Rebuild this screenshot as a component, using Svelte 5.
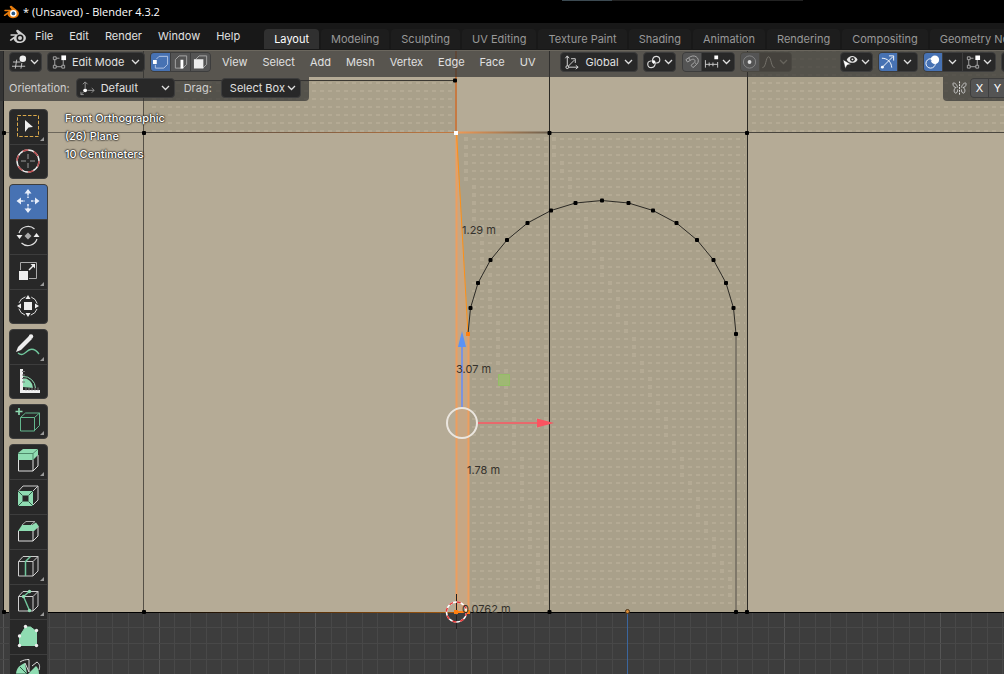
<script>
  const menus = ['File', 'Edit', 'Render', 'Window', 'Help']
  const tabs = ['Layout', 'Modeling', 'Sculpting', 'UV Editing', 'Texture Paint', 'Shading', 'Animation', 'Rendering', 'Compositing', 'Geometry Nodes']
  const viewMenus = ['View', 'Select', 'Add', 'Mesh', 'Vertex', 'Edge', 'Face', 'UV']

  let activeTab = $state('Layout')
  let activeTool = $state('Move')
  let selectMode = $state('Vertex select')

  const blender = (main, ring, pupil) => `<path fill="${main}" d="M9.3 1.600l6 4.700c1 .9 1.600 2 1.600 3.300 0 2.800-2.700 5-6.100 5-3.200 0-5.600-1.800-6.100-4.200l-2.500 1.800c-.9.6-1.900-.5-1-1.200l5-3.800H2.100c-1 0-1-1.500 0-1.500h7.200L7.500 3.200c-1.200-1 .6-2.600 1.800-1.600z"/><circle cx="11" cy="9.500" r="3.500" fill="${ring}"/><circle cx="11" cy="9.500" r="2" fill="${pupil}"/>`
  const cubeBack = `<path d="M4.500 9l4.500-5h15v14l-5 5M19 9l5-5" stroke="#ccc" fill="none"/>`
  const quad = `<path d="M4 5.500v6M5.500 13h6M13 11.500v-6M5.500 4H9" stroke="#aaa"/><path d="M2.500 2.500h3v3h-3zM2.500 11.500h3v3h-3zM11.500 11.500h3v3h-3z" stroke="#aaa" fill="none"/><path d="M11 1h5v5h-5z" fill="#fff"/>`

  const icons = {
    logo: blender('#e87d0d', '#fff', '#265787'),
    logoMono: blender('#d0d0d0', '#181818', '#d0d0d0'),
    viewport: `<path d="M5 5.500L3.500 15M10.500 9L9.500 15M1 8h8M0 12.500h14" stroke="#c8c8c8" fill="none"/><circle cx="11.500" cy="4.500" r="3.500" fill="#eee"/>`,
    editMode: quad,
    vertexSel: `<path d="M3.500 5l3-3h9v8.500l-4 4h-9V11" stroke="#b9c9e6" fill="none"/><path d="M0 6h4v4H0z" fill="#fff"/>`,
    edgeSel: `<path d="M2.500 14.500v-9l4-4h8v9l-4 4z" stroke="#aaa" fill="none"/><path d="M8 5.500h3V15H8z" fill="#fff"/>`,
    faceSel: `<path d="M2.500 5.500l4-4h8v9l-4 4z" stroke="#aaa" fill="none"/><path d="M1 5h10v10H1z" fill="#eee"/>`,
    global: `<path d="M3.500 2v11.500H15M3.500 13.500L11 6M1.500 4l2-2.500 2 2.500M12.500 11.500l2.500 2-2.500 2M7.500 4.500H12V9" stroke="#ddd" fill="none"/><circle cx="3.500" cy="13.500" r="1.500" fill="#282828" stroke="#ddd"/>`,
    pivot: `<path d="M8.500 9.500c-3-2-1.500-7.500 2.500-7.500 4.500 0 5 6.500.5 7h-1M8 6.500c3.500 2 1.500 7.500-2.500 7.500C1 14 .5 7.500 5 7h1" stroke="#ddd" fill="none" stroke-width="1.200"/><circle cx="8.200" cy="8" r="1.500" fill="#fff"/>`,
    magnet: `<path d="M2 5.500l4.500-3C13-1 18 6 13.500 10.500L9.500 14 7.500 11.500l3.500-3c2-2-.5-4.500-3-3L3.700 8zM11.500 8.500l2 2M5 3.500l1.500 2.500" stroke="#aaa" fill="none"/>`,
    increment: `<path d="M1.500 6v8M5.500 8.500v4M9.500 8.500v4M14.500 8v6M1.500 10.500h13" stroke="#ccc" fill="none"/><path d="M11 1h4v4h-4z" fill="#fff"/>`,
    propEdit: `<circle cx="8" cy="8" r="6.500" stroke="#888" fill="none"/><circle cx="8" cy="8" r="2" fill="#ddd"/>`,
    falloff: `<path d="M1.500 14c4 0 3.500-11.500 6.500-11.500S10.500 14 14.500 14" stroke="#77746e" fill="none"/>`,
    visibility: `<path d="M4 5.500c2.500-5 9-5 11.500 0-2.500 4.500-9 4.500-11.500 0z" fill="#e5e5e5"/><circle cx="10" cy="5.200" r="2.500" fill="#282828"/><circle cx="10" cy="5.200" r="1" fill="#eee"/><path d="M0 5.500l8.500 5-4 .7L2.500 15z" fill="#fff" stroke="#282828" stroke-width=".5"/>`,
    gizmo: `<path d="M2 14L13.500 2.500M2 4c6 0 10 4 10.500 10M9.500 1.500h5v5" stroke="#fff" fill="none"/><circle cx="2.500" cy="13.500" r="1.500" fill="#fff"/>`,
    overlays: `<circle cx="6" cy="9.500" r="5" stroke="#fff" fill="none"/><circle cx="10.500" cy="5.500" r="4.500" fill="#fff"/><path d="M6.500 6c-1.500 3 .5 5.500 3.500 5" stroke="#4772b3" fill="none"/>`,
    xray: `<path d="M1.500 3.500h10v11h-10z" stroke="#ddd" stroke-width="2" fill="none"/>`,
    orient: `<path d="M5.500 8V2M3 4l2.500-2.500L8 4M8 10.500h7M12.500 8l2.500 2.500-2.500 2.500M4 12l-3 3M1 12v3h3" stroke="#999" fill="none"/><circle cx="5.500" cy="10.500" r="2" fill="#fff"/>`,
    mirror: `<path d="M6 7.500C5 3 1 1.500 1 3.500c0 3 2 4 3.500 4C2 8 1.500 12 3.500 13.500c2 0 2.500-2 2.500-4M10 7.500c1-4.500 5-6 5-4 0 3-2 4-3.500 4 2.500.5 3 4.500 1 6-2 0-2.500-2-2.500-4" stroke="#ccc" fill="none"/><path d="M8 1v14" stroke="#eee" stroke-dasharray="2 1"/>`
  }

  const toolGroups = [
    [
      { name: 'Select Box', more: true, art: `<path d="M3.500 3.500h21v21h-21z" stroke="#d9a84a" stroke-dasharray="3.500 1.750" fill="none"/><path d="M11 8l8 7-4.500.5L11 20z" fill="#eee"/>` },
      { name: 'Cursor', art: `<circle cx="14" cy="14" r="11" stroke="#eee" fill="none" stroke-width="1.400"/><circle cx="14" cy="14" r="11" stroke="#b9484b" stroke-dasharray="5.800 5.700" fill="none" stroke-width="1.400"/><path d="M14 7v5M14 16v5M7 14h5M16 14h5" stroke="#999"/>` }
    ],
    [
      { name: 'Move', art: `<path d="M14 2l3.500 4.500h-7zM14 26l3.500-4.500h-7zM2.500 14L7 10.500v7zM25.500 14L21 10.500v7z" fill="#e8eefa"/><path d="M14 6v5M14 17v5M7 14h4M17 14h4" stroke="#e8eefa" stroke-width="1.500" stroke-dasharray="2.500 1"/>` },
      { name: 'Rotate', art: `<path d="M5 11a9.500 9.500 0 0 1 15.500-4M23 17a9.500 9.500 0 0 1-15.500 4" stroke="#ddd" fill="none" stroke-width="1.200"/><path d="M2.500 13h6L5.500 17zM19.500 15h6L22.500 11z" fill="#eee"/><path d="M14 10.500l3.500 3.500-3.500 3.500-3.500-3.500z" fill="#aaa"/>` },
      { name: 'Scale', more: true, art: `<path d="M6.500 13V5.500h16v16H15" stroke="#aaa" fill="none"/><path d="M5 14h9v9H5z" fill="#eee"/><path d="M15 13l4-4" stroke="#eee" stroke-width="1.500"/><path d="M21 7v4.500L16.500 7z" fill="#eee"/>` },
      { name: 'Transform', art: `<circle cx="14" cy="14" r="9.500" stroke="#ddd" fill="none" stroke-dasharray="9 5.920" stroke-dashoffset="-3"/><path d="M10 10h8v8h-8zM14 3l2.500 4h-5zM14 25l2.500-4h-5zM3 14l4-2.500v5zM25 14l-4-2.500v5z" fill="#eee"/>` }
    ],
    [
      { name: 'Annotate', more: true, art: `<path d="M3 22c5 4 7-1 11-3s7 0 10 4" stroke="#71c79d" fill="none" stroke-width="1.400" transform="translate(1 -1)"/><path d="M2 20l2-5L15 4l3 3L7 18z" fill="#eee"/><circle cx="17" cy="4.500" r="2.200" fill="#eee"/>` },
      { name: 'Measure', art: `<path d="M9 20V11a10 10 0 0 1 10 10z" fill="#8fdcb2"/><path d="M9 9.500A12 12 0 0 1 21.500 21" stroke="#8fdcb2" fill="none"/><path d="M7.500 2v22.500H26" stroke="#eee" fill="none" stroke-width="3"/><path d="M11 4.500H8M11 8H8M11 11.500H8M11 15H8M12 20.500v3M15 20.500v3M18 20.500v3M21 20.500v3M24 20.500v3" stroke="#777"/>` }
    ],
    [
      { name: 'Add Cube', more: true, art: `<path d="M5 1v7M1.500 4.500h7" stroke="#8fdcb2" stroke-width="1.600"/><path d="M6.500 10.500h14v13.500h-14zM6.500 10.500l5-4.500h14v12.500l-5 5M20.500 10.500l5-4.500" stroke="#63b68d" fill="none"/>` }
    ],
    [
      { name: 'Extrude Region', more: true, art: `<path d="M4 6l5-4h15v6l-5 5H4z" fill="#8fdcb2"/><path d="M4 6.500h15l5-4.500M19 6.500V13" stroke="#4f8a6b" fill="none"/><path d="M4.500 13v11h14.500V13M24 8v11l-5 5" stroke="#ddd" fill="none"/>` },
      { name: 'Inset Faces', art: `${cubeBack}<path d="M4 9h15v15H4z" fill="#8fdcb2"/><path d="M8.500 13.500h6v6h-6z" fill="#282828"/><path d="M4 9l4.500 4.500M19 9l-4.500 4.500M4 24l4.500-4.500M19 24l-4.500-4.500" stroke="#2f5a45"/>` },
      { name: 'Bevel', art: `<path d="M8 8l4-3.500h9L17 8" stroke="#aaa" fill="none"/><path d="M4 14l4-6h10l4-2.500 3 4-5 4.500z" fill="#8fdcb2"/><path d="M4.500 14v10H19V14M24 10v9l-5 5" stroke="#ddd" fill="none"/>` },
      { name: 'Loop Cut', more: true, art: `<path d="M4.500 9.500v14.500H19V9.500zM4.500 9.500L9 4.500h15V19l-5 5M19 9.500l5-5" stroke="#ccc" fill="none"/><path d="M11.500 24V9.500l5-5" stroke="#71c79d" fill="none" stroke-width="1.500"/>` },
      { name: 'Knife', more: true, art: `<path d="M4.500 9.500v14.500H19V9.500zM4.500 9.500L9 4.500h15V19l-5 5M19 9.500l5-5" stroke="#ccc" fill="none"/><path d="M15.500 4.500L9.500 9.500l6 14" stroke="#71c79d" fill="none" stroke-width="1.400"/><circle cx="15.500" cy="4.500" r="1.700" fill="#8fdcb2"/><circle cx="9.500" cy="9.500" r="1.700" fill="#8fdcb2"/><circle cx="15.500" cy="23.500" r="1.700" fill="#8fdcb2"/>` },
      { name: 'Poly Build', art: `<path d="M5.500 23.500v-9L11.500 5l5 0 6 4.500v14z" fill="#8fdcb2" stroke="#8fdcb2" stroke-linejoin="round"/><g fill="#eee"><circle cx="11.500" cy="4.500" r="1.700"/><circle cx="22.500" cy="8.500" r="1.700"/><circle cx="5.500" cy="14" r="1.700"/><circle cx="5.500" cy="23.500" r="1.700"/><circle cx="22.500" cy="23.500" r="1.700"/></g>` },
      { name: 'Spin', art: `<path d="M2 18c0-7 4-10 9-12l2 11zM14 17l8-8c3 3 3 6 3 10h-9z" fill="#8fdcb2"/><path d="M6 5c3-2 6-2.500 9-2.500V15l-4-9M18 9l5-4c3 2 3 5 2 8" stroke="#ddd" fill="none"/><path d="M2 17h24v11H2z" fill="#8fdcb2"/><path d="M13 17L6 10M13 17H2M14 17v10" stroke="#2f5a45"/>` }
    ]
  ]

  const arch = [
    [468, 334], [470.5, 308], [478, 283], [490.5, 260], [507, 240], [527.5, 223], [551, 210.5], [575.5, 203], [602, 200.5],
    [628.5, 203], [653, 210.5], [676.5, 223], [697, 240], [713.5, 260], [726, 283], [733.5, 308], [736, 334]
  ]
  const verts = [...arch.slice(1), [4, 133], [144, 133], [455, 80.5], [549.5, 133], [747, 133], [4, 612], [144, 612], [549.5, 612], [736, 612], [747, 612]]
  const lengths = [[462, 234, '1.29 m'], [456, 373, '3.07 m'], [467, 474, '1.78 m'], [462, 613, '0.0762 m']]

  // floor grid, ten minor cells to each major one
  const gridX = Array.from({ length: 120 }, (_, i) => ({ pos: Math.round(2.6 + i * 15.62), major: i % 10 === 0 }))
  const gridY = [627, 643, 659, 674, 690, 706, 721]

  // drifting rows of larger dots where the two shading patterns overlap
  const bigDots = []
  for (let y = 137; y < 608; y += 8) {
    bigDots.push([464 + 8 * Math.floor((y - 132) / 46), y])
    bigDots.push([552 + 8 * Math.floor((y - 134) / 20), y])
    if (y % 24 !== 1) bigDots.push([544, y])
  }
</script>

{#snippet icon(name, size = 16)}
  <svg class="icon" width={size} height={size} viewBox="0 0 17 16" aria-hidden="true">{@html icons[name]}</svg>
{/snippet}

{#snippet chevron()}
  <svg class="chevron" width="9" height="6" viewBox="0 0 9 6" aria-hidden="true"><path d="M1 1l3.500 3.500L8 1" fill="none" stroke="currentColor" stroke-width="1.300" /></svg>
{/snippet}

<div class="app">
  <div class="titlebar">
    {@render icon('logo')}
    <span>* (Unsaved) - Blender 4.3.2</span>
  </div>

  <nav class="topbar">
    <div class="menus">
      <button class="logo" aria-label="Blender">{@render icon('logoMono', 17)}</button>
      {#each menus as m}
        <button>{m}</button>
      {/each}
    </div>
    <div class="tabs">
      {#each tabs as t}
        <button class:active={activeTab === t} onclick={() => (activeTab = t)}>{t}</button>
      {/each}
    </div>
  </nav>

  <main class="viewport">
    <svg class="scene" width="100%" height="100%" aria-hidden="true">
      <defs>
        <pattern id="dots" x="0" y="2" width="8" height="8" patternUnits="userSpaceOnUse">
          <rect width="4" height="2" fill="#b4aa94" />
        </pattern>
        <linearGradient id="fadeL" x1="144" x2="456" y1="0" y2="0" gradientUnits="userSpaceOnUse">
          <stop offset="0" stop-color="#4f4b44" /><stop offset=".5" stop-color="#7c5c42" /><stop offset="1" stop-color="#c57a40" />
        </linearGradient>
        <linearGradient id="fadeR" x1="456" x2="549" y1="0" y2="0" gradientUnits="userSpaceOnUse">
          <stop offset="0" stop-color="#f29a55" /><stop offset="1" stop-color="#6b604f" />
        </linearGradient>
        <linearGradient id="fadeB" x1="144" x2="456" y1="0" y2="0" gradientUnits="userSpaceOnUse">
          <stop offset="0" stop-color="#000" /><stop offset="1" stop-color="#a35a10" />
        </linearGradient>
      </defs>
      <g transform="translate(0 -50)">
        <g stroke="#484848">
          {#each gridX as g}
            <line x1={g.pos + 0.5} x2={g.pos + 0.5} y1="50" y2="1600" stroke={g.major ? '#555' : '#484848'} />
          {/each}
          {#each gridY as y}
            <line x1="0" x2="100%" y1={y + 0.5} y2={y + 0.5} />
          {/each}
          <path d="M627.500 612V1600" stroke="#3b669e" />
        </g>

        <rect x="3" y="50" width="100%" height="562" fill="#b5ab96" />
        <g fill="#a9a08a">
          <rect x="144" y="81" width="312" height="52" />
          <rect x="456" y="133" width="291" height="479" />
          <rect x="747" y="50" width="100%" height="83" />
        </g>
        <g fill="url(#dots)">
          <rect x="148" y="82" width="306" height="50" />
          <rect x="472" y="136" width="273" height="474" />
          <rect x="750" y="50" width="100%" height="82" />
        </g>
        {#each bigDots as [x, y]}
          <rect {x} {y} width="4" height="4" fill="#b4aa94" />
        {/each}

        <path d="M456 133L468.500 334V612H456z" fill="#c6a785" />
        <g fill="none">
          <path d="M3.500 50V612" stroke="#111" />
          <path d="M4 132.500H144" stroke="#6d675b" />
          <path d="M144 132.500H456" stroke="url(#fadeL)" />
          <path d="M456 132.500H549" stroke="url(#fadeR)" stroke-width="2" />
          <path d="M549 132.500H1600" stroke="#4a463e" />
          <path d="M144 80.500H455" stroke="#3b3832" />
          <path d="M143.500 50V612" stroke="#555046" />
          <path d="M549.500 50V612M747.500 50V612" stroke="#2c2a25" />
          <path d="M456 50V133" stroke="#c67a43" stroke-width="2" />
          <path d="M736 334V612" stroke="#7f786a" stroke-width="2" />
          <path d="M3 612.500H1600" stroke="#000" />
          <path d="M144 612.500H456" stroke="url(#fadeB)" />
          <path d="M456.500 133V612M468.500 334V612" stroke="#ed9e5f" stroke-width="2" />
          <path d="M456.500 133L468 334" stroke="#ff9016" />
          <path d={'M' + arch.map(p => p.join(' ')).join('L')} stroke="#2c2a25" />
        </g>
        {#each verts as [x, y]}
          <rect x={x - 2} y={y - 2} width="4" height="4" rx="1" />
        {/each}
        <path d="M454 131h4v4h-4z" fill="#fff" />
        <path d="M466 332h4v4h-4zM454 610h4v4h-4zM466 610h4v4h-4zM456 611h12v2h-12z" fill="#ff8010" />
        <circle cx="627.500" cy="611.500" r="2" fill="#d68a34" stroke="#4b3218" />

        <path d="M462 408V346" stroke="#7d93dc" stroke-width="2" />
        <path d="M462 331l4 16h-8z" fill="#5b92f5" />
        <path d="M478 423h60" stroke="#e8696c" stroke-width="2" />
        <path d="M554 423l-17-4.500v9z" fill="#fb5360" />
        <path d="M498.500 374.500h11v11h-11z" fill="#9fb873" stroke="#94bd66" />
        <circle cx="462" cy="423" r="15" fill="none" stroke="#ebe6df" stroke-width="2" />

        <path d="M456.500 594v16M456.500 615v14" stroke="#222" />
        <circle cx="456.500" cy="612" r="10" fill="none" stroke="#fff" stroke-width="1.500" />
        <circle cx="456.500" cy="612" r="10" fill="none" stroke="#e63535" stroke-width="1.500" stroke-dasharray="4 3.850" />

        {#each lengths as [x, y, label]}
          <text {x} {y}>{label}</text>
        {/each}
      </g>
    </svg>

    <header class="header">
      <button class="box" aria-label="Editor type">{@render icon('viewport')}{@render chevron()}</button>
      <label class="dropdown mode">
        {@render icon('editMode')}
        <select aria-label="Mode"><option>Edit Mode</option></select>
        {@render chevron()}
      </label>
      <div class="group modes">
        {#each [['Vertex select', 'vertexSel'], ['Edge select', 'edgeSel'], ['Face select', 'faceSel']] as [label, name]}
          <button aria-label={label} class:on={selectMode === label} onclick={() => (selectMode = label)}>{@render icon(name)}</button>
        {/each}
      </div>
      <div class="view-menus">
        {#each viewMenus as m}
          <button>{m}</button>
        {/each}
      </div>
      <label class="dropdown global">
        {@render icon('global')}
        <select aria-label="Transform orientation"><option>Global</option></select>
        {@render chevron()}
      </label>
      <button class="box pivot" aria-label="Pivot point">{@render icon('pivot')}{@render chevron()}</button>
      <div class="group snap">
        <button aria-label="Snap">{@render icon('magnet')}</button>
        <button class="dark" aria-label="Snap to">{@render icon('increment')}{@render chevron()}</button>
      </div>
      <div class="group dim">
        <button aria-label="Proportional editing">{@render icon('propEdit')}</button>
        <button aria-label="Falloff">{@render icon('falloff')}{@render chevron()}</button>
      </div>
      <div class="right">
        <button class="box" aria-label="Visibility">{@render icon('visibility')}{@render chevron()}</button>
        <div class="group">
          <button class="on" aria-label="Gizmos">{@render icon('gizmo')}</button>
          <button class="dark arrow" aria-label="Gizmo options">{@render chevron()}</button>
        </div>
        <div class="group">
          <button class="on" aria-label="Overlays">{@render icon('overlays')}</button>
          <button class="dark arrow" aria-label="Overlay options">{@render chevron()}</button>
          <button class="dark" aria-label="Mesh overlays">{@render icon('editMode')}{@render chevron()}</button>
        </div>
        <button class="box" aria-label="X-ray">{@render icon('xray')}</button>
      </div>
    </header>

    <div class="settings">
      <div class="panel">
        <label for="orientation">Orientation:</label>
        <div class="dropdown orientation">
          {@render icon('orient')}
          <select id="orientation"><option>Default</option></select>
          {@render chevron()}
        </div>
        <label for="drag" class="drag-label">Drag:</label>
        <div class="dropdown drag">
          <select id="drag"><option>Select Box</option></select>
          {@render chevron()}
        </div>
      </div>
      <div class="panel mirror">
        {@render icon('mirror')}
        <div class="group">
          <button>X</button>
          <button>Y</button>
        </div>
      </div>
    </div>

    <div class="body">
      <div class="toolbar">
        {#each toolGroups as group}
          <div class="tools">
            {#each group as tool}
              <button aria-label={tool.name} class:active={activeTool === tool.name} class:more={tool.more} onclick={() => (activeTool = tool.name)}>
                <svg width="28" height="28" viewBox="0 0 28 28">{@html tool.art}</svg>
              </button>
            {/each}
          </div>
        {/each}
      </div>
      <div class="info">
        <div>Front Orthographic</div>
        <div>(26) Plane</div>
        <div>10 Centimeters</div>
      </div>
    </div>
  </main>
</div>

<style>
  :global(body) {
    background: #000;
    overflow: hidden;
  }

  .app {
    display: flex;
    flex-direction: column;
    height: 100vh;
    overflow: hidden;
    font-family: Inter, sans-serif;
    font-size: 11px;
    line-height: 16px;
    color: #e0e0e0;
  }

  button,
  select {
    font: inherit;
    color: inherit;
    background: none;
    border: none;
    padding: 0;
    margin: 0;
    white-space: nowrap;
  }

  .icon,
  .chevron {
    flex-shrink: 0;
    display: block;
  }

  .titlebar {
    display: flex;
    align-items: center;
    gap: 4px;
    height: 23px;
    flex-shrink: 0;
    padding-left: 3px;
    background: linear-gradient(90deg, transparent 56%, #3c4a52 56%, #3c4a52 61%, #222 61%, #222 80%, transparent 80%) 0 0 / 100% 1px no-repeat #000;
    color: #fff;
    font-family: 'Open Sans', sans-serif;
    font-size: 11px;
  }

  .topbar {
    display: flex;
    height: 27px;
    flex-shrink: 0;
    background: #181818;
  }

  .menus {
    display: flex;
    flex-shrink: 0;
    padding-left: 9px;
    margin-right: 16px;
  }

  .menus button {
    padding: 0 8px;
    height: 26px;
  }

  .menus .logo {
    padding: 0 1px 0 0;
  }

  .tabs {
    display: flex;
    gap: 2px;
    padding-top: 6px;
  }

  .tabs button {
    height: 20px;
    padding: 0 10px;
    border-radius: 4px 4px 0 0;
    background: #1d1d1d;
    color: #989898;
  }

  .tabs .active {
    background: #303030;
    color: #fff;
  }

  .viewport {
    position: relative;
    flex: 1;
    display: flex;
    flex-direction: column;
    min-height: 0;
    background: #3d3d3d;
    overflow: hidden;
  }

  .scene {
    position: absolute;
    inset: 0;
  }

  .scene text {
    font-size: 11px;
    fill: #35322c;
  }

  .header,
  .settings,
  .body {
    position: relative;
    display: flex;
    flex-shrink: 0;
  }

  .header {
    height: 27px;
    padding: 1px 0 0 9px;
    box-sizing: border-box;
    align-items: flex-start;
    background: rgba(48, 48, 48, 0.7);
    border-top: 1px solid #6b675e;
  }

  .header > * {
    flex-shrink: 0;
  }

  .box,
  .dropdown {
    display: flex;
    align-items: center;
    box-sizing: border-box;
    height: 20px;
    border: 1px solid #3d3d3d;
    border-radius: 4px;
    background: #282828;
  }

  .box {
    gap: 2px;
    padding: 0 2px;
    min-width: 31px;
  }

  .dropdown {
    padding: 0 4px 0 3px;
  }

  .dropdown select {
    flex: 1;
    min-width: 0;
    appearance: none;
    outline: none;
    padding-left: 5px;
  }

  .mode {
    width: 98px;
    margin-left: 5px;
  }

  .group {
    display: flex;
    box-sizing: border-box;
    height: 20px;
    border: 1px solid #3d3d3d;
    border-radius: 4px;
    background: #3d3d3d;
    gap: 1px;
    overflow: hidden;
  }

  .group button {
    display: flex;
    align-items: center;
    gap: 2px;
    padding: 0 1px;
    background: #545454;
  }

  .group .dark {
    background: #282828;
    padding: 0 3px 0 2px;
  }

  .group .arrow {
    padding: 0 5px;
  }

  .group .on {
    background: #4772b3;
  }

  .modes {
    margin-left: 5px;
  }

  .modes button {
    padding: 0 1px 0 2px;
  }

  .view-menus {
    display: flex;
    gap: 1px;
    margin: 0 18px 0 4px;
    text-shadow: 0 1px 2px rgba(0, 0, 0, 0.6);
  }

  .view-menus button {
    height: 20px;
    padding: 0 7px;
  }

  .global {
    width: 78px;
  }

  .pivot,
  .dim {
    margin-left: 5px;
  }

  .snap {
    margin-left: 6px;
  }

  .dim {
    background: #4a4842;
    border-color: #4a4842;
  }

  .dim button + button {
    background: #45423d;
    color: #66635c;
    padding-right: 3px;
  }

  .right {
    display: flex;
    gap: 5px;
    margin-left: auto;
    padding-left: 48px;
  }

  .settings {
    justify-content: space-between;
    align-items: flex-start;
  }

  .panel {
    display: flex;
    align-items: center;
    box-sizing: border-box;
    height: 24px;
    padding: 0 8px 2px 9px;
    border-radius: 0 0 4px 0;
    background: rgba(48, 48, 48, 0.7);
    color: #d0d0d0;
  }

  .orientation {
    width: 99px;
    margin-left: 6px;
    color: #e0e0e0;
  }

  .drag-label {
    margin-left: 9px;
  }

  .drag {
    width: 80px;
    margin-left: 9px;
    color: #e0e0e0;
  }

  .mirror {
    width: 61px;
    overflow: hidden;
    border-radius: 0 0 0 4px;
    gap: 2px;
  }

  .mirror .group {
    flex-shrink: 0;
  }

  .mirror .group button {
    justify-content: center;
    width: 17px;
    color: #fff;
  }

  .body {
    padding: 8px 9px;
    gap: 17px;
  }

  .toolbar {
    display: flex;
    flex-direction: column;
    gap: 5px;
  }

  .tools {
    box-sizing: border-box;
    width: 39px;
    border: 1px solid #3d3d3d;
    border-radius: 4px;
    background: #282828;
    overflow: hidden;
  }

  .tools button {
    position: relative;
    display: flex;
    align-items: center;
    justify-content: center;
    box-sizing: border-box;
    width: 100%;
    height: 35px;
    padding: 0 1px 2px 0;
    border-bottom: 1px solid #3d3d3d;
  }

  .tools button:last-child {
    height: 33px;
    border-bottom: none;
  }

  .tools .active {
    background: #4772b3;
  }

  .more::after {
    content: '';
    position: absolute;
    right: 3px;
    bottom: 3px;
    border: 2px solid;
    border-color: transparent #999 #999 transparent;
  }

  .info {
    line-height: 18px;
    font-weight: 500;
    color: #fff;
    text-shadow: 0 0 2px #000, 0 0 2px #222, 0 0 1px #222;
  }
</style>
